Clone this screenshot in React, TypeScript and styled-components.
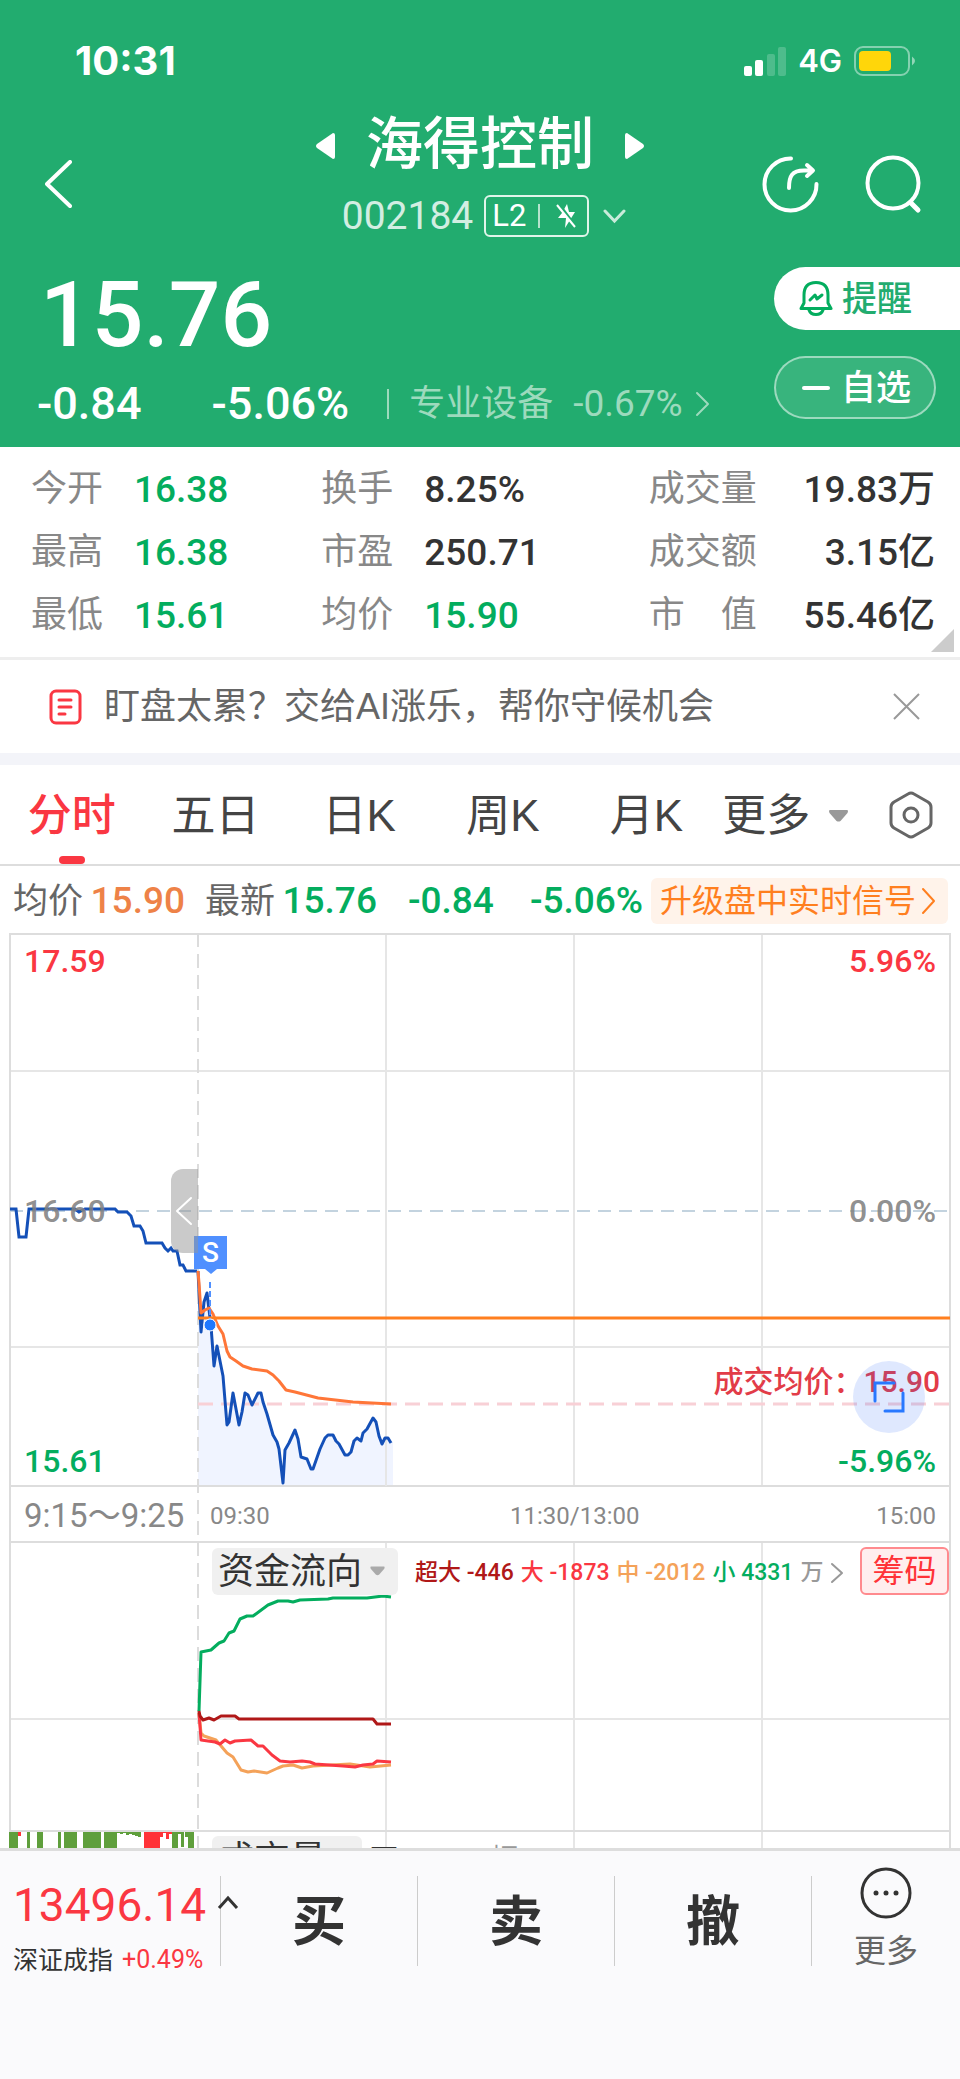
import React from "react";
import styled, { createGlobalStyle } from "styled-components";

const cjk = '"Liberation Sans", "Noto Sans CJK SC", sans-serif';
const digits = 'Roboto, "Noto Sans CJK SC", sans-serif';
const c = {
  brand: "#22ac6f", green: "#03ad5e", red: "#fa3742", dark: "#333333", gray: "#888888",
  line: "#dddddd", orange: "#ff7f1f", amber: "#f4a259", deepRed: "#b01818", blue: "#1450b8",
};

const Global = createGlobalStyle`
  * { box-sizing: border-box; }
  body { margin: 0; background: #fafafc; font-family: ${cjk}; color: ${c.dark}; }
  button { font-family: inherit; border: 0; padding: 0; margin: 0; background: none; color: inherit; cursor: pointer; }
  h1, p, dl, dd { margin: 0; font-weight: 400; }
  svg { display: block; flex: none; }
`;

const Page = styled.main`display: flex; flex-direction: column; background: #fff; white-space: nowrap;`;

/* Header */
const Header = styled.header`background: ${c.brand}; color: #fff; height: 447px;`;
const StatusBar = styled.div`
  display: flex; justify-content: space-between; align-items: center;
  height: 110px; padding: 12px 44px 0 75px;
`;
const Clock = styled.time`font: 700 40px/44px Inter, sans-serif;`;
const StatusIcons = styled.div`display: flex; align-items: center; gap: 12px; font: 600 31px/40px Inter, sans-serif;`;
const NavBar = styled.div`
  display: grid; grid-template-columns: 1fr auto 1fr; align-items: center;
  height: 140px; padding: 0 38px;
`;
const Back = styled.button`justify-self: start; padding: 8px 0 0 7px;`;
const NavActions = styled.div`display: flex; justify-content: flex-end; gap: 46px; padding-top: 8px;`;
const TitleBlock = styled.div`display: flex; flex-direction: column; align-items: center; gap: 13px; padding-bottom: 13px;`;
const TitleRow = styled.div`display: flex; align-items: center; gap: 31px; height: 72px;`;
const StockName = styled.h1`font-size: 57px; line-height: 72px; font-weight: 500; margin-top: -4px;`;
const CodeRow = styled.div`display: flex; align-items: center; gap: 14px; padding-left: 8px;`;
const Code = styled.span`font: 400 39px/42px ${digits}; opacity: 0.8; margin-right: -3px;`;
const LevelBadge = styled.button`
  display: flex; align-items: center; gap: 12px; height: 42px; width: 105px; padding: 0 6px;
  border: 2px solid #e0f5ea; border-radius: 6px; font: 400 31px/38px ${digits};
`;
const QuoteHead = styled.div`display: flex; justify-content: space-between; padding-top: 17px;`;
const PriceColumn = styled.div`padding: 4px 0 0 37px;`;
const Price = styled.p`font: 500 91px/88px ${digits}; padding-left: 3px;`;
const ChangeRow = styled.div`
  display: flex; align-items: center; height: 52px; margin-top: 19px;
  font: 500 45px/52px ${digits};
`;
const Percent = styled.span`margin-left: 70px;`;
const Sector = styled.a`
  display: flex; align-items: center; gap: 20px; margin-left: 38px; padding-left: 22px;
  font: 400 36px/52px ${digits}; color: #9ddabd; text-decoration: none;
  background: linear-gradient(#9ddabd, #9ddabd) left center / 2px 30px no-repeat;
`;
const SectorChange = styled.span`display: flex; align-items: center; gap: 12px; font-size: 37px;`;
const HeadButtons = styled.div`display: flex; flex-direction: column; gap: 26px;`;
const Pill = styled.button<{ $solid?: boolean }>`
  display: flex; align-items: center; height: 63px; font-size: 35px; font-weight: 500; line-height: 60px;
  width: ${(p) => (p.$solid ? 186 : 162)}px; padding-left: ${(p) => (p.$solid ? 25 : 24)}px; gap: 9px;
  border-radius: ${(p) => (p.$solid ? "32px 0 0 32px" : "32px")};
  border: ${(p) => (p.$solid ? "0" : "2px solid rgba(255,255,255,.5)")};
  color: ${(p) => (p.$solid ? c.brand : "#fff")};
  background: ${(p) => (p.$solid ? "#fff" : "rgba(255,255,255,.1)")};
`;

/* Key figures */
const Stats = styled.dl`
  position: relative; display: grid; grid-template-columns: 290fr 327fr 286fr;
  grid-auto-rows: 63px; padding: 10px 25px 11px 31px; border-bottom: 3px solid #eeeeee;
`;
const Stat = styled.div`display: flex; align-items: center;`;
const StatName = styled.dt<{ $w: number }>`
  width: ${(p) => p.$w}px; font-size: 36px; line-height: 50px; color: ${c.gray};
  text-align-last: justify;
`;
const StatValue = styled.dd<{ $up?: boolean; $end?: boolean }>`
  font: 500 37px/50px ${digits}; padding-top: 2px;
  color: ${(p) => (p.$up ? c.green : c.dark)};
  margin-left: ${(p) => (p.$end ? "auto" : "31px")};
`;
const Corner = styled.svg`position: absolute; right: 6px; bottom: 5px;`;

/* Notice */
const Notice = styled.section`
  display: flex; align-items: center; height: 93px; padding: 0 40px 0 49px;
  font-size: 36px; line-height: 50px; color: #666;
`;
const NoticeText = styled.p`flex: 1; padding-left: 22px;`;
const Band = styled.div`height: 12px; background: #f3f4f9;`;

/* Tabs */
const Tabs = styled.nav`
  display: flex; align-items: center; height: 101px;
  padding: 0 27px 0 0; border-bottom: 2px solid ${c.line};
`;
const Tab = styled.button<{ $on?: boolean }>`
  position: relative; flex: 0 0 15.4%; height: 99px; padding-top: 2px; font-size: 44px; line-height: 97px;
  color: ${(p) => (p.$on ? c.red : "#444")}; font-weight: ${(p) => (p.$on ? 500 : 400)};
  &::after {
    content: ""; display: ${(p) => (p.$on ? "block" : "none")};
    position: absolute; left: 50%; bottom: 0; width: 26px; height: 8px; margin-left: -13px;
    border-radius: 4px; background: ${c.red};
  }
`;
const MoreTabs = styled(Tab)`display: flex; align-items: center; flex: 0 0 auto; gap: 18px; margin-right: auto; padding-left: 4px;`;

/* Chart summary */
const Summary = styled.div`
  display: flex; align-items: center; height: 67px; padding: 2px 12px 0 13px;
  font-size: 35px; line-height: 50px; color: #666;
`;
const Num = styled.span<{ $color: string; $gap: number }>`
  font: 500 37px/50px ${digits}; color: ${(p) => p.$color}; margin: 0 ${(p) => p.$gap}px 0 0;
`;
const Signal = styled.button`
  display: flex; align-items: center; justify-content: space-between; width: 297px; height: 46px;
  margin-left: auto; padding: 0 12px 0 9px;
  border-radius: 6px; background: #fff3ea; color: ${c.orange}; font-size: 32px; line-height: 46px;
`;

/* Charts */
const Charts = styled.section`position: relative; height: 915px; overflow: hidden;`;
const Plot = styled.svg`
  position: absolute; inset: 0; width: 100%; height: 100%;
  path, line, polyline { vector-effect: non-scaling-stroke; }
`;
const Layer = styled.div`position: relative;`;
const PricePanel = styled.div`
  display: flex; flex-direction: column; justify-content: space-between; height: 553px; padding: 6px 24px 3px;
`;
const ScaleRow = styled.div<{ $color: string }>`
  display: flex; justify-content: space-between; font: 500 32px/44px ${digits}; color: ${(p) => p.$color};
`;
const TimeAxis = styled.div`
  display: grid; grid-template-columns: 186fr 363fr 363fr; align-items: center; height: 56px;
  padding: 3px 24px 0; font: 400 24px/40px ${digits}; color: ${c.gray};
`;
const AuctionTime = styled.span`font-size: 33px;`;
const MidGroup = styled.span`display: flex; justify-content: space-between; margin-left: -63px;`;
const DealAverage = styled.p`
  position: absolute; right: 20px; top: 429px; font: 500 30px/40px ${digits}; color: #e23c48;
`;
const Expand = styled.button`
  position: absolute; right: 35px; top: 428px; width: 72px; height: 72px; border-radius: 36px;
  background: rgba(40, 100, 245, 0.15); display: grid; place-items: center;
`;
const Handle = styled.button`
  position: absolute; right: 79.4%; top: 236px; width: 27px; height: 84px; border-radius: 12px 0 0 12px;
  background: rgba(150, 150, 150, 0.5); display: grid; place-items: center;
`;
const SellMark = styled.span`
  position: absolute; left: 20.2%; top: 303px; width: 33px; height: 33px; background: #5090ff; color: #fff;
  font: 500 28px/33px ${digits}; text-align: center;
  &::after {
    content: ""; position: absolute; left: 11px; top: 33px;
    border: 6px solid transparent; border-top: 5px solid #5090ff; border-bottom: 0;
  }
`;
const FlowHead = styled.div`
  display: flex; align-items: center; height: 58px; padding: 0 11px 0 212px;
`;
const Indicator = styled.button`
  display: flex; align-items: center; gap: 8px; height: 47px; padding: 0 13px 0 6px; border-radius: 6px;
  background: #f0f0f0; font-size: 36px; line-height: 47px; color: ${c.dark};
`;
const Legend = styled.div`
  display: flex; align-items: center; gap: 7px; margin-left: 17px; padding-top: 4px; font: 500 23px/30px ${digits};
`;
const LegendItem = styled.span<{ $color: string }>`color: ${(p) => p.$color};`;
const Chips = styled.button`
  margin-left: auto; width: 89px; height: 48px; border: 2px solid #ff8a8e; border-radius: 6px;
  background: #ffeeee; color: #ff3338; font-size: 32px; line-height: 44px;
`;
const VolumeHead = styled.div`
  display: flex; gap: 8px; padding: 5px 0 0 212px; margin-top: 231px; font-size: 36px; line-height: 47px;
`;
const VolumeUnit = styled.span<{ $gap?: number; $faint?: boolean }>`
  margin-left: ${(p) => p.$gap ?? 0}px; color: ${(p) => (p.$faint ? "#999" : c.dark)}; font-size: 28px; line-height: 47px;
`;

/* Bottom bar */
const BottomBar = styled.footer`
  display: grid; grid-template-columns: 220fr 592fr 148fr; align-items: start; height: 230px;
  border-top: 3px solid ${c.line}; background: #fafafc;
`;
const IndexCard = styled.button`
  position: relative; text-align: left; height: 134px; padding: 24px 0 0 13px;
`;
const IndexValue = styled.span`display: block; font: 400 46px/60px ${digits}; color: ${c.red};`;
const IndexName = styled.span`display: flex; gap: 9px; font-size: 25px; line-height: 50px;`;
const IndexChange = styled.span`font: 400 25px/50px ${digits}; color: ${c.red};`;
const Caret = styled.svg`position: absolute; right: -19px; top: 22px; z-index: 1;`;
const Trades = styled.div`display: grid; grid-template-columns: repeat(3, 1fr); margin-top: 25px; border-right: 1px solid #ccc;`;
const Trade = styled.button`
  height: 90px; border-left: 1px solid #ccc; padding-top: 3px; font-size: 54px; font-weight: 700; line-height: 87px;
`;
const More = styled.button`
  display: flex; flex-direction: column; align-items: center; gap: 9px; padding-top: 16px;
  font-size: 32px; line-height: 46px; color: #666;
`;

const Chevron = ({ w = 14, h = 22, sw = 2, left = false, color = "currentColor" }) => (
  <svg width={w} height={h} viewBox={`0 0 ${w} ${h}`} fill="none" stroke={color} strokeWidth={sw}>
    <path d={left ? `M${w - 2} 2L2 ${h / 2}L${w - 2} ${h - 2}` : `M2 2L${w - 2} ${h / 2}L2 ${h - 2}`} strokeLinecap="round" strokeLinejoin="round" />
  </svg>
);
const Triangle = ({ w = 20, color = "#999" }) => (
  <svg width={w} height="12" viewBox="0 0 20 12"><path d="M1 0H19Q20 1 19 3L12 11Q10 12 8 11L1 3Q0 1 1 0Z" fill={color} /></svg>
);

const stats: { name: string; value: string; up?: boolean }[] = [
  { name: "今开", value: "16.38", up: true }, { name: "换手", value: "8.25%" }, { name: "成交量", value: "19.83万" },
  { name: "最高", value: "16.38", up: true }, { name: "市盈", value: "250.71" }, { name: "成交额", value: "3.15亿" },
  { name: "最低", value: "15.61", up: true }, { name: "均价", value: "15.90", up: true }, { name: "市 值", value: "55.46亿" },
];

const auction = "10,276 16,276 19,304 26,304 29,276 75,276 79,279 85,276 115,276 118,279 127,279 131,283 134,293 140,293 143,298 146,310 162,310 165,315 168,318 171,315 173,318 177,318 180,332 183,332 186,338 197,338";
const price = "198,338 201,399 204,369 207,360 211,393 214,433 217,413 220,428 223,443 227,492 229,489 233,460 239,492 242,479 245,460 248,462 252,472 258,460 261,460 263,469 267,481 271,495 273,502 277,509 279,516 283,550 285,517 289,510 295,497 298,506 301,524 307,526 311,536 313,536 320,516 325,505 328,502 333,502 336,508 339,511 345,522 348,522 351,519 354,508 357,505 361,508 363,500 367,496 373,485 376,489 379,503 382,511 385,505 388,505 391,510";
const average = "198,338 199,350 201,380 205,377 209,375 213,381 215,386 218,393 223,401 227,418 230,424 236,428 243,433 252,436 267,438 273,442 279,448 286,457 295,459 318,465 353,469 391,471";
const flows = [
  { color: c.amber, points: "199,780 201,800 204,803 216,807 227,820 233,824 241,837 248,839 254,838 267,840 278,835 283,833 293,832 302,835 313,833 350,831 370,834 391,832" },
  { color: c.red, points: "199,780 201,807 215,809 220,811 225,807 230,810 235,808 251,807 258,813 263,813 272,822 280,828 290,829 302,828 310,829 315,831 343,833 355,834 363,832 373,831 377,828 391,829" },
  { color: c.green, points: "199,778 201,719 211,717 219,710 224,708 229,700 234,698 240,686 247,683 253,683 268,672 278,668 288,668 293,669 300,667 328,666 333,665 367,665 383,663 391,664" },
  { color: c.deepRed, points: "199,778 200,783 203,787 209,785 214,787 221,783 235,783 239,786 373,786 377,791 391,791" },
];
const G = "#5f9f3c";
const R = "#ff3338";
const bars: [number, number, number, string][] = [
  [9, 9, 17, G], [18, 3, 4, R], [27, 3, 17, G], [37, 6, 17, G], [58, 3, 17, G], [64, 13, 17, G], [83, 18, 17, G],
  [104, 13, 17, G], [117, 3, 1, G], [120, 3, 2, G], [123, 3, 1, G], [126, 3, 3, G], [129, 3, 2, G], [132, 3, 3, G],
  [135, 3, 4, G], [138, 3, 5, G], [144, 16, 17, R], [160, 3, 5, R], [163, 3, 1, R], [166, 3, 7, R], [169, 3, 2, R],
  [172, 6, 17, G], [178, 3, 2, G], [181, 3, 15, G], [185, 3, 5, G], [188, 6, 17, G],
];

export default function App() {
  return (
    <>
      <Global />
      <Page>
        <Header>
          <StatusBar>
            <Clock>10:31</Clock>
            <StatusIcons>
              <svg width="42" height="29" viewBox="0 0 42 29" fill="#fff">
                <rect x="0" y="19" width="8" height="10" rx="2" /><rect x="11" y="13" width="8" height="16" rx="2" />
                <g opacity=".2"><rect x="23" y="7" width="8" height="22" rx="2" /><rect x="34" y="0" width="8" height="29" rx="2" /></g>
              </svg>
              <span>4G</span>
              <svg width="62" height="30" viewBox="0 0 62 30">
                <rect x="1" y="1" width="54" height="28" rx="8" fill="none" stroke="#fff" strokeOpacity=".45" strokeWidth="2" />
                <rect x="5" y="5" width="32" height="20" rx="4" fill="#ffd60a" />
                <path d="M58 10.500Q64 15 58 19.500Z" fill="#fff" opacity=".5" />
              </svg>
            </StatusIcons>
          </StatusBar>
          <NavBar>
            <Back aria-label="返回">
              <svg width="27" height="48" viewBox="0 0 27 48" fill="none" stroke="#fff" strokeWidth="4"><path d="M25 2L2 24L25 46" strokeLinecap="round" strokeLinejoin="round" /></svg>
            </Back>
            <TitleBlock>
              <TitleRow>
                <svg width="19" height="26" viewBox="0 0 19 26" fill="#fff"><path d="M17 0Q19 0 19 2V24Q19 26 17 26L1 15Q-1 13 1 11Z" /></svg>
                <StockName>海得控制</StockName>
                <svg width="19" height="26" viewBox="0 0 19 26" fill="#fff"><path d="M2 0Q0 0 0 2V24Q0 26 2 26L18 15Q20 13 18 11Z" /></svg>
              </TitleRow>
              <CodeRow>
                <Code>002184</Code>
                <LevelBadge>
                  <span>L2</span>
                  <svg width="38" height="26" viewBox="0 0 38 26">
                    <path d="M1 1V25" stroke="#b5e3cd" strokeWidth="2" />
                    <path d="M29 1L31 9H37L27 25L28 15H20L24 10Z" fill="#fff" />
                    <path d="M20 0L38 24" stroke={c.brand} strokeWidth="3" />
                    <path d="M19 2L37 24" stroke="#fff" strokeWidth="2" />
                  </svg>
                </LevelBadge>
                <svg width="23" height="15" viewBox="0 0 23 15" fill="none" stroke="#c9ebda" strokeWidth="3"><path d="M2 2L11.500 12L21 2" strokeLinecap="round" /></svg>
              </CodeRow>
            </TitleBlock>
            <NavActions>
              <button aria-label="分享">
                <svg width="57" height="57" viewBox="0 0 57 57" fill="none" stroke="#fff" strokeWidth="4" strokeLinecap="round" strokeLinejoin="round">
                  <path d="M29 2.500A26 26 0 1 0 54.500 28" /><path d="M27 32C27 20 30 14.500 42 14.500H50M45 9L51 14.500L45 20" />
                </svg>
              </button>
              <button aria-label="搜索">
                <svg width="57" height="59" viewBox="0 0 57 59" fill="none" stroke="#fff" strokeWidth="4" strokeLinecap="round">
                  <circle cx="28" cy="28" r="25.500" /><path d="M46 48L53 55" strokeWidth="5" />
                </svg>
              </button>
            </NavActions>
          </NavBar>
          <QuoteHead>
            <PriceColumn>
              <Price>15.76</Price>
              <ChangeRow>
                <span>-0.84</span>
                <Percent>-5.06%</Percent>
                <Sector href="#sector">
                  <span>专业设备</span>
                  <SectorChange>-0.67%<Chevron w={15} h={26} /></SectorChange>
                </Sector>
              </ChangeRow>
            </PriceColumn>
            <HeadButtons>
              <Pill $solid>
                <svg width="34" height="35" viewBox="0 0 34 35" fill="none" stroke="#03ad5e" strokeWidth="3" strokeLinejoin="round" strokeLinecap="round">
                  <path d="M5 14C5 5 10 1.500 17 1.500S29 5 29 14V22L32 27.500H2L5 22ZM10 29C12 35 22 35 24 29" />
                  <path d="M11 19L16 14L18 18L23 14" />
                </svg>
                提醒
              </Pill>
              <Pill>
                <svg width="32" height="4" viewBox="0 0 32 4"><rect x="2" width="28" height="4" rx="2" fill="#fff" /></svg>
                自选
              </Pill>
            </HeadButtons>
          </QuoteHead>
        </Header>

        <Stats>
          {stats.map((s, i) => (
            <Stat key={s.name}>
              <StatName $w={i % 3 === 2 ? 108 : 72}>{s.name}</StatName>
              <StatValue $up={s.up} $end={i % 3 === 2}>{s.value}</StatValue>
            </Stat>
          ))}
          <Corner width="23" height="23" viewBox="0 0 23 23"><path d="M23 0V23H0Z" fill="#ccc" /></Corner>
        </Stats>

        <Notice>
          <svg width="33" height="36" viewBox="0 0 33 36" fill="none" stroke={c.red} strokeWidth="3" strokeLinecap="round">
            <rect x="2" y="2" width="29" height="32" rx="5" /><path d="M10 11H22M10 18H22M10 25H16" />
          </svg>
          <NoticeText>盯盘太累？交给AI涨乐，帮你守候机会</NoticeText>
          <button aria-label="关闭">
            <svg width="27" height="27" viewBox="0 0 27 27" stroke="#999" strokeWidth="2"><path d="M1 1L26 26M26 1L1 26" /></svg>
          </button>
        </Notice>
        <Band />

        <Tabs>
          <Tab $on>分时</Tab>
          <Tab>五日</Tab>
          <Tab>日K</Tab>
          <Tab>周K</Tab>
          <Tab>月K</Tab>
          <MoreTabs>更多<Triangle w={21} /></MoreTabs>
          <button aria-label="设置">
            <svg width="44" height="48" viewBox="0 0 44 48" fill="none" stroke="#666" strokeWidth="3" strokeLinejoin="round">
              <path d="M19 3Q22 1 25 3L39 11Q42 13 42 16V32Q42 35 39 37L25 45Q22 47 19 45L5 37Q2 35 2 32V16Q2 13 5 11Z" /><circle cx="22" cy="24" r="7" />
            </svg>
          </button>
        </Tabs>

        <Summary>
          <span>均价</span><Num $color="#ee8247" $gap={20}>&thinsp;15.90</Num>
          <span>最新</span><Num $color={c.green} $gap={31}>&thinsp;15.76</Num>
          <Num $color={c.green} $gap={36}>-0.84</Num>
          <Num $color={c.green} $gap={0}>-5.06%</Num>
          <Signal>升级盘中实时信号<Chevron w={15} h={28} /></Signal>
        </Summary>

        <Charts>
          <Plot viewBox="0 0 960 915" preserveAspectRatio="none" fill="none" aria-hidden="true">
            <g stroke="#e6e6e6" strokeWidth="2">
              <path d="M10 138H950M10 414H950M10 786H950M386 0V553M574 0V553M762 0V553M386 609V915M574 609V915M762 609V915" />
            </g>
            <path d="M10 915V1H950V915M10 553H950M10 609H950M10 898H950" stroke={c.line} strokeWidth="2" />
            <path d="M10 278H950" stroke="#c3d3df" strokeWidth="2" strokeDasharray="13 8" />
            <path d={`M198 338L${price}L393 508V552H198Z`} fill="#f0f4ff" />
            <path d="M386 400V553" stroke="#e6e6e6" strokeWidth="2" />
            <path d="M198 0V915" stroke="#dcdcdc" strokeWidth="2" strokeDasharray="14 7" />
            <path d="M198 471H950" stroke="#f8d0d6" strokeWidth="3" strokeDasharray="15 8" />
            <polyline points={auction} stroke={c.blue} strokeWidth="3" />
            <polyline points={price} stroke={c.blue} strokeWidth="3" strokeLinejoin="round" />
            <polyline points={average} stroke="#ff7638" strokeWidth="3" strokeLinejoin="round" />
            <path d="M198 385H950" stroke={c.orange} strokeWidth="3" />
            <path d="M210 349V386" stroke="#5090ff" strokeWidth="2" strokeDasharray="6 3" />
            <circle cx="210" cy="392" r="6" fill="#1f78ff" stroke="#fff" />
            {flows.map((f) => <polyline key={f.color} points={f.points} stroke={f.color} strokeWidth="3" strokeLinejoin="round" />)}
            {bars.map(([x, w, h, fill]) => <rect key={x} x={x} y="899" width={w} height={h} fill={fill} />)}
          </Plot>
          <Layer>
            <PricePanel>
              <ScaleRow $color={c.red}><span>17.59</span><span>5.96%</span></ScaleRow>
              <ScaleRow $color="rgba(130,130,130,.9)"><span>16.60</span><span>0.00%</span></ScaleRow>
              <ScaleRow $color={c.green}><span>15.61</span><span>-5.96%</span></ScaleRow>
            </PricePanel>
            <DealAverage>成交均价：15.90</DealAverage>
            <Expand aria-label="全屏">
              <svg width="32" height="32" viewBox="0 0 32 32" fill="none" stroke="#2878ff" strokeWidth="3" strokeLinecap="round">
                <path d="M2 20V2H21M30 12V30H12" />
              </svg>
            </Expand>
            <SellMark>S</SellMark>
            <Handle aria-label="收起"><Chevron w={18} h={30} sw={2} left color="#fff" /></Handle>
            <TimeAxis>
              <AuctionTime>9:15～9:25</AuctionTime>
              <span>09:30</span>
              <MidGroup><span>11:30/13:00</span><span>15:00</span></MidGroup>
            </TimeAxis>
            <FlowHead>
              <Indicator>资金流向<Triangle w={15} color="#aaa" /></Indicator>
              <Legend>
                <LegendItem $color={c.deepRed}>超大 -446</LegendItem>
                <LegendItem $color={c.red}>大 -1873</LegendItem>
                <LegendItem $color={c.amber}>中 -2012</LegendItem>
                <LegendItem $color={c.green}>小 4331</LegendItem>
                <LegendItem $color="#999">万</LegendItem>
                <Chevron w={14} h={22} color="#999" />
              </Legend>
              <Chips>筹码</Chips>
            </FlowHead>
            <VolumeHead>
              <Indicator>成交量<Triangle w={15} color="#aaa" /></Indicator>
              <VolumeUnit>万</VolumeUnit>
              <VolumeUnit $gap={84} $faint>幅</VolumeUnit>
            </VolumeHead>
          </Layer>
        </Charts>

        <BottomBar>
          <IndexCard>
            <IndexValue>13496.14</IndexValue>
            <IndexName>深证成指<IndexChange>+0.49%</IndexChange></IndexName>
            <Caret width="22" height="46" viewBox="0 0 22 46" fill="none" stroke="#333" strokeWidth="3"><path d="M2 35L11 25L20 35" /></Caret>
          </IndexCard>
          <Trades><Trade>买</Trade><Trade>卖</Trade><Trade>撤</Trade></Trades>
          <More>
            <svg width="52" height="52" viewBox="0 0 52 52" fill="none" stroke="#333" strokeWidth="3">
              <circle cx="26" cy="26" r="24" />
              <g fill="#333" stroke="none"><circle cx="16" cy="26" r="2.500" /><circle cx="26" cy="26" r="2.500" /><circle cx="36" cy="26" r="2.500" /></g>
            </svg>
            更多
          </More>
        </BottomBar>
      </Page>
    </>
  );
}
